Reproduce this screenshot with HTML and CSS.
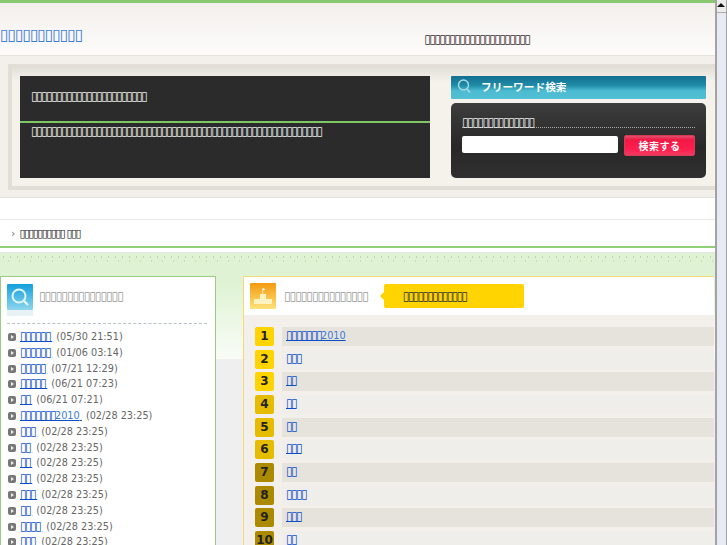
FILE: index.html
```html
<!DOCTYPE html>
<html lang="ja">
<head>
    <meta charset="UTF-8">
    <title>▯▯▯▯▯▯▯▯▯▯▯</title>
    <link rel="stylesheet" href="styles.css">
</head>
<body>
<div class="page">
    <div class="content">
        <div class="top-line"></div>

        <!-- Header -->
        <div class="header">
            <a class="site-title" href="#">▯▯▯▯▯▯▯▯▯▯▯</a>
            <span class="site-desc">▯▯▯▯▯▯▯▯▯▯▯▯▯▯▯▯▯▯▯▯▯</span>
        </div>

        <!-- Hero -->
        <div class="hero">
            <div class="hero-frame">
                <div class="hero-box">
                    <div class="hero-title">▯▯▯▯▯▯▯▯▯▯▯▯▯▯▯▯▯▯▯▯▯▯▯</div>
                    <div class="hero-text">▯▯▯▯▯▯▯▯▯▯▯▯▯▯▯▯▯▯▯▯▯▯▯▯▯▯▯▯▯▯▯▯▯▯▯▯▯▯▯▯▯▯▯▯▯▯▯▯▯▯▯▯▯▯▯▯▯▯</div>
                </div>
                <div class="search-col">
                    <div class="search-head">
                        <svg class="search-head-icon" width="14" height="17" viewBox="0 0 14 17">
                            <circle cx="6.5" cy="7" r="5" fill="none" stroke="#a8dbe4" stroke-width="1.4"/>
                            <path d="M10 11l3 3.5" fill="none" stroke="#a8dbe4" stroke-width="1.6"/>
                        </svg>
                        <span>フリーワード検索</span>
                    </div>
                    <div class="search-box">
                        <div class="search-label"><span>▯▯▯▯▯▯▯▯▯▯▯▯▯▯</span></div>
                        <div class="search-form">
                            <input class="search-input" type="text">
                            <button class="search-btn">検索する</button>
                        </div>
                    </div>
                </div>
            </div>
        </div>

        <!-- Breadcrumb -->
        <div class="crumb-wrap">
            <div class="crumb">
                <span class="crumb-arrow">›</span>
                <span class="crumb-text">▯▯▯▯▯▯▯▯▯▯ ▯▯▯</span>
            </div>
        </div>

        <!-- Columns -->
        <div class="main">
            <div class="side">
                <div class="panel-head">
                    <svg class="panel-icon" width="26" height="32" viewBox="0 0 26 32">
                        <defs>
                            <linearGradient id="blue" x1="0" y1="0" x2="0" y2="1">
                                <stop offset="0" stop-color="#12a0dc"/>
                                <stop offset="1" stop-color="#8fd6ee"/>
                            </linearGradient>
                        </defs>
                        <rect width="26" height="26" rx="1" fill="url(#blue)"/>
                        <rect y="26" width="26" height="6" fill="#e6f2f6"/>
                        <circle cx="12" cy="12" r="6.5" fill="none" stroke="#e4f6fb" stroke-width="2"/>
                        <path d="M17 17l4 4" stroke="#e4f6fb" stroke-width="2.4"/>
                    </svg>
                    <span class="panel-title">▯▯▯▯▯▯▯▯▯▯▯▯▯▯▯</span>
                </div>
                <ul class="recent">
                    <li><a href="#">▯▯▯▯▯▯ </a><span class="date">(05/30 21:51)</span></li>
                    <li><a href="#">▯▯▯▯▯▯ </a><span class="date">(01/06 03:14)</span></li>
                    <li><a href="#">▯▯▯▯▯ </a><span class="date">(07/21 12:29)</span></li>
                    <li><a href="#">▯▯▯▯▯ </a><span class="date">(06/21 07:23)</span></li>
                    <li><a href="#">▯▯ </a><span class="date">(06/21 07:21)</span></li>
                    <li><a href="#">▯▯▯▯▯▯▯<span class="lat">2010</span> </a><span class="date">(02/28 23:25)</span></li>
                    <li><a href="#">▯▯▯ </a><span class="date">(02/28 23:25)</span></li>
                    <li><a href="#">▯▯ </a><span class="date">(02/28 23:25)</span></li>
                    <li><a href="#">▯▯ </a><span class="date">(02/28 23:25)</span></li>
                    <li><a href="#">▯▯ </a><span class="date">(02/28 23:25)</span></li>
                    <li><a href="#">▯▯▯ </a><span class="date">(02/28 23:25)</span></li>
                    <li><a href="#">▯▯ </a><span class="date">(02/28 23:25)</span></li>
                    <li><a href="#">▯▯▯▯ </a><span class="date">(02/28 23:25)</span></li>
                    <li><a href="#">▯▯▯ </a><span class="date">(02/28 23:25)</span></li>
                </ul>
            </div>

            <div class="rank">
                <div class="rank-head">
                    <svg class="panel-icon" width="26" height="26" viewBox="0 0 26 26">
                        <defs>
                            <linearGradient id="orange" x1="0" y1="0" x2="0" y2="1">
                                <stop offset="0" stop-color="#f49a10"/>
                                <stop offset="1" stop-color="#fde27a"/>
                            </linearGradient>
                        </defs>
                        <rect width="26" height="26" rx="1" fill="url(#orange)"/>
                        <path d="M4 21v-5h6v-5h6v5h6v5z" fill="#fdf3c0"/>
                        <path d="M12.5 11V5l3 1.2-2.4 1.2V11z" fill="#fff"/>
                    </svg>
                    <span class="panel-title">▯▯▯▯▯▯▯▯▯▯▯▯▯▯▯</span>
                    <span class="callout">▯▯▯▯▯▯▯▯▯▯▯▯▯</span>
                </div>
                <ol class="rank-list">
                    <li><span class="no no-a">1</span><a class="row" href="#">▯▯▯▯▯▯▯<span class="lat">2010</span></a></li>
                    <li><span class="no no-a">2</span><a class="row" href="#">▯▯▯</a></li>
                    <li><span class="no no-a">3</span><a class="row" href="#">▯▯</a></li>
                    <li><span class="no no-b">4</span><a class="row" href="#">▯▯</a></li>
                    <li><span class="no no-b">5</span><a class="row" href="#">▯▯</a></li>
                    <li><span class="no no-b">6</span><a class="row" href="#">▯▯▯</a></li>
                    <li><span class="no no-c">7</span><a class="row" href="#">▯▯</a></li>
                    <li><span class="no no-c">8</span><a class="row" href="#">▯▯▯▯</a></li>
                    <li><span class="no no-c">9</span><a class="row" href="#">▯▯▯</a></li>
                    <li><span class="no no-c">10</span><a class="row" href="#">▯▯</a></li>
                </ol>
            </div>
        </div>
    </div>

    <div class="scrollbar"><div class="scroll-btn"></div></div>
</div>
</body>
</html>
```

FILE: styles.css
```css
html, body {
    margin: 0;
    height: 545px;
    overflow: hidden;
}

body {
    font-family: "DejaVu Sans", sans-serif;
    font-size: 12px;
    letter-spacing: -1.6px;
    color: #555;
    background-color: #fff;
}

a {
    color: #0b4fc8;
}

.lat {
    font-size: 9.7px;
    letter-spacing: 0;
    color: #3a78d8;
}

.page {
    display: flex;
    height: 545px;
}

.content {
    width: 715px;
    flex: none;
    overflow: hidden;
}

.top-line {
    height: 3px;
    background-color: #88c96f;
}

.header {
    height: 52px;
    display: flex;
    background: linear-gradient(#f3f0ec, #fdfcfb);
    border-bottom: 1px solid #e6e3dd;
}

.site-title {
    font-size: 16px;
    letter-spacing: -1.33px;
    color: #3f7ed8;
    text-decoration: none;
    margin-top: 23px;
    line-height: 18px;
}

.site-desc {
    color: #333;
    margin-top: 30px;
    margin-left: 342px;
    line-height: 12px;
}

.hero {
    height: 133px;
    padding: 8px 0 0 8px;
    background-color: #f3f0eb;
    border-bottom: 1px solid #e6e3dd;
}

.hero-frame {
    display: flex;
    gap: 21px;
    height: 102px;
    padding: 8px 9px 8px 8px;
    border: 4px solid #e2ddd7;
    border-right: 0;
    background: linear-gradient(#e4e1da, #f5f2ec 14px);
}

.hero-box {
    width: 410px;
    height: 102px;
    background-color: #2b2b2b;
    color: #eee;
}

.hero-title {
    height: 47px;
    padding-left: 11px;
    line-height: 40px;
    border-bottom: 2px solid #7dc765;
    box-sizing: border-box;
}

.hero-text {
    padding: 1px 0 0 11px;
    line-height: 14px;
}

.search-col {
    width: 255px;
    display: flex;
    flex-direction: column;
    gap: 4px;
}

.search-head {
    height: 23px;
    display: flex;
    align-items: center;
    gap: 10px;
    padding: 0 0 2px 6px;
    box-sizing: border-box;
    border-radius: 1px;
    background: linear-gradient(#136f90, #1f8aa6 40%, #4cbcd2 65%, #52bfd3);
    color: #fff;
    font-family: "Noto Sans CJK JP", sans-serif;
    font-weight: 700;
    font-size: 10.7px;
    letter-spacing: 0;
}

.search-box {
    height: 75px;
    box-sizing: border-box;
    padding: 13px 11px 0;
    border-radius: 5px;
    background: linear-gradient(#3d3d3d, #282828 60%, #303030);
    color: #eee;
}

.search-label {
    height: 11px;
    line-height: 12px;
    letter-spacing: -1.48px;
    border-bottom: 1px dotted #aaa;
}

.search-form {
    display: flex;
    gap: 6px;
    margin-top: 7px;
}

.search-input {
    width: 156px;
    height: 17px;
    margin-top: 1px;
    padding: 0;
    border: 0;
    border-radius: 2px;
    background-color: #fff;
}

.search-btn {
    width: 71px;
    height: 21px;
    padding: 0;
    border: 1px solid #d53a58;
    border-radius: 2px;
    background: linear-gradient(#e0506c, #f01845 20%, #ff1f4f 70%, #f03a60);
    color: #fff;
    font-family: "Noto Sans CJK JP", sans-serif;
    font-weight: 700;
    font-size: 10px;
    letter-spacing: 0.5px;
}

.crumb-wrap {
    padding: 21px 0 4px;
    background-color: #fff;
}

.crumb {
    height: 26px;
    display: flex;
    align-items: center;
    gap: 4px;
    padding-left: 11px;
    background-color: #fff;
    border-top: 1px solid #e8e8ec;
    border-bottom: 2px solid #8fcf77;
    color: #111;
}

.crumb-arrow {
    color: #777;
    font-size: 11px;
    letter-spacing: 0;
}

.crumb-text {
    font-size: 11px;
    letter-spacing: -1.57px;
    font-weight: 700;
}

.main {
    display: flex;
    gap: 27px;
    height: 269px;
    padding-top: 23px;
    background:
        radial-gradient(circle, #bcd8aa 0.6px, transparent 0.9px) 0 2px / 7px 4px repeat-x,
        radial-gradient(circle, #c8e0b8 0.6px, transparent 0.9px) 3px 6px / 11px 4px repeat-x,
        linear-gradient(#dff3d4, #dff3d4 30px, #f9fcf7 106px, #efefef 106px);
    border-top: 1px solid #e4e4e4;
}

.side {
    width: 214px;
    flex: none;
    height: 290px;
    background-color: #fff;
    border: 1px solid #9acb84;
}

.panel-head {
    display: flex;
    align-items: flex-start;
    gap: 6px;
    height: 39px;
    padding-top: 7px;
    margin: 0 8px 0 6px;
    border-bottom: 1px dashed #b4c0cc;
}

.panel-icon {
    flex: none;
}

.panel-title {
    letter-spacing: -1.02px;
    color: #999;
}

.side .panel-title {
    line-height: 24px;
}

.recent {
    list-style: none;
    margin: 0;
    padding: 5px 0 0 7px;
}

.recent li {
    position: relative;
    height: 15.8px;
    line-height: 15.8px;
    display: flex;
    gap: 4px;
    white-space: pre;
}

.recent li::before {
    content: "";
    width: 8px;
    height: 8px;
    margin-top: 4px;
    flex: none;
    border-radius: 2px;
    background-color: #777;
}

.recent li::after {
    content: "";
    position: absolute;
    left: 3px;
    top: 6px;
    border: 2px solid transparent;
    border-right: 0;
    border-left: 3px solid #eee;
}

.date {
    font-size: 9.7px;
    letter-spacing: 0;
    color: #666;
}

.rank {
    width: 470px;
    height: 290px;
    flex: none;
    background-color: #f3f0ec;
    border: 1px solid #f6d978;
    border-right: 0;
}

.rank-head {
    display: flex;
    align-items: center;
    gap: 8px;
    height: 38px;
    padding-left: 6px;
    background-color: #fff;
}

.callout {
    position: relative;
    margin-left: 8px;
    width: 140px;
    height: 24px;
    padding-left: 19px;
    box-sizing: border-box;
    line-height: 24px;
    letter-spacing: -1.72px;
    border-radius: 2px;
    background-color: #ffd400;
    color: #333;
}

.callout::before {
    content: "";
    position: absolute;
    left: -4px;
    top: 8px;
    border: 4px solid transparent;
    border-left: 0;
    border-right-color: #ffd400;
}

.rank-list {
    list-style: none;
    margin: 12px 0 0;
    padding: 0 0 0 11px;
    display: flex;
    flex-direction: column;
    gap: 3.67px;
}

.rank-list li {
    display: flex;
    gap: 8px;
    height: 19px;
}

.no {
    width: 19px;
    height: 19px;
    flex: none;
    border-radius: 2px;
    text-align: center;
    line-height: 19px;
    letter-spacing: 0;
    font-weight: 700;
    color: #222;
}

.no-a {
    background-color: #ffd400;
}

.no-b {
    background-color: #e6bc00;
}

.no-c {
    background-color: #ab8a00;
}

.row {
    flex: 1;
    padding-left: 4px;
    line-height: 17px;
    background-color: #f0eeeb;
}

.rank-list li:nth-child(odd) .row {
    background-color: #e6e3dd;
}

.scrollbar {
    width: 9px;
    flex: none;
    background-color: #e7eaf2;
    border-left: 2px solid #a3a3a3;
    border-right: 1px solid #a3a3a3;
}

.scroll-btn {
    position: relative;
    height: 12px;
    background-color: #ececec;
    border-bottom: 1px solid #aaa;
}

.scroll-btn::before {
    content: "";
    position: absolute;
    left: 0;
    top: 3px;
    border: 4px solid transparent;
    border-top: 0;
    border-bottom-color: #111;
}
```
